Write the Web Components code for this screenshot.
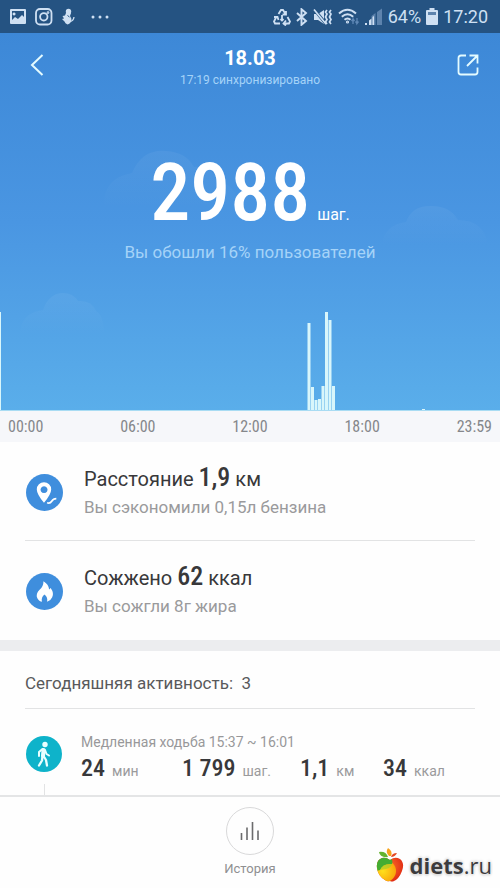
<!DOCTYPE html>
<html lang="ru">
<head>
<meta charset="utf-8">
<meta name="viewport" content="width=device-width, initial-scale=1">
<title>Шаги</title>
<style>
  :root { --digits: "Roboto Condensed", "Liberation Sans Narrow", Roboto, sans-serif; --line: #e2e3e4; }
  body { margin: 0; font-family: Roboto, "Noto Sans", sans-serif; background: #fefefe; color: #3a3a3c; }
</style>
</head>
<body>
<steps-app></steps-app>
<script>
const define = (name, html) => {
  const t = document.createElement('template');
  t.innerHTML = html;
  customElements.define(name, class extends HTMLElement {
    constructor() {
      super();
      this.attachShadow({ mode: 'open' }).append(t.content.cloneNode(true));
    }
  });
};

define('status-bar', `
<style>
  :host { display: flex; align-items: center; justify-content: space-between; height: 33px; padding: 0 12px 0 9px; background: #255382; color: #cfe0f3; font-size: 18px; line-height: 24px; }
  div { display: flex; align-items: center; }
  .left { gap: 8px; } .right { gap: 5px; }
  svg { display: block; }
</style>
<div class="left">
  <svg width="18" height="18" viewBox="0 0 18 18"><path fill="#cfe0f3" fill-rule="evenodd" d="M2 1h14q1 0 1 1v13q0 1-1 1H2q-1 0-1-1V2q0-1 1-1zM3 3v9l3-3 3 2 4-4 2 2V3zM5 4.500a1.500 1.500 0 1 0 .1 0z"/></svg>
  <svg width="18" height="18" viewBox="0 0 18 18" fill="none" stroke="#cfe0f3" stroke-width="1.800"><rect x="1" y="1" width="15.500" height="15.500" rx="4"/><circle cx="8.800" cy="8.800" r="3.700"/><circle cx="13" cy="4.600" r=".5"/></svg>
  <svg width="14" height="18" viewBox="0 0 14 18"><g fill="#cfe0f3"><circle cx="7.500" cy="3.500" r="2.700"/><path d="M5 5h5l-1 3 1.500 3-1 3.500q-1 1.500-3 2-2.500-1-3-3L1 11l2-.5L1.500 8 4 7.500z"/></g><path d="M9 13.500q3.500-.5 4-4.500M6 7l2 3" fill="none" stroke="#cfe0f3" stroke-width="1.300"/><path d="M6.500 7.500l2 1.500" stroke="#255382"/></svg>
  <svg width="34" height="18" viewBox="0 0 34 18" fill="#cfe0f3"><circle cx="10" cy="9" r="1.500"/><circle cx="17" cy="9" r="1.500"/><circle cx="24" cy="9" r="1.500"/></svg>
</div>
<div class="right">
  <svg width="18" height="18" viewBox="0 0 18 18" fill="none" stroke="#cfe0f3" stroke-width="1.800"><path d="M5.500 6l2.500-4h2L12.500 6M13 3v3.500H9.500M3.500 8.500L1 13.500l1 2H7M1 9h3.500l1 3M14.500 9l2.500 4.500-1 2h-5M13 12.500l-2.500 3 2.500 2M9 7v5M7.500 11L9 12.500l1.500-1.500"/></svg>
  <svg width="12" height="18" viewBox="0 0 12 18" fill="none" stroke="#cfe0f3" stroke-width="1.900"><path d="M1 5l9 8-4.500 3.800V1.200L10 5l-9 8"/></svg>
  <svg width="20" height="18" viewBox="0 0 20 18"><path fill="#cfe0f3" d="M1 6h4l6-4v14l-6-4H1z"/><path d="M1 1l12 15" stroke="#255382" stroke-width="3"/><path d="M1 1.500l12 14.500M14 2l-1.500 2L14 6l-1.500 3L14 11.500 12.500 14 14 16M18 2l-1.500 2L18 6l-1.500 3 1.500 2.500-1.500 2.500 1.500 2" fill="none" stroke="#cfe0f3" stroke-width="1.700"/></svg>
  <svg width="22" height="18" viewBox="0 0 22 18" fill="none" stroke="#cfe0f3" stroke-width="2"><path d="M1 5.500q8.500-7.500 17 0M3.800 8.800q5.700-5 11.400 0M6.500 11.800q3-2.600 6 0"/><circle cx="9.500" cy="14" r=".6"/><path d="M15 16v-5l-1.500 2M19 10v5.500l1.500-2M19 15.500l-1.500-2M15 11l1.500 2" stroke="#5f88b6" stroke-width="1.300"/></svg>
  <svg width="18" height="18" viewBox="0 0 18 18"><path fill="#5d83ad" d="M12 4l5-3.500V17h-5zM6.500 8l4-3v12h-4z"/><path fill="#cfe0f3" d="M0 15h2v2H0zM4 12.500l2.500-2V17H4zM7.500 9L9 8v9H7.500z"/></svg>
  <span>64%</span>
  <svg width="12" height="18" viewBox="0 0 12 18"><path fill="#cfe0f3" d="M3.500 0h5v2H11q1 0 1 1v13q0 1-1 1H1q-1 0-1-1V3q0-1 1-1h2.500z"/><path fill="#5d83ad" d="M2 4h8v3H2z"/></svg>
  <span>17:20</span>
</div>`);

define('step-chart', `
<style>:host { display: block; height: 100px; } svg { display: block; width: 100%; height: 100%; }</style>
<svg viewBox="0 0 500 100" preserveAspectRatio="none" fill="#d8f6fb" role="img" aria-label="Шаги за день">
  <path d="M0 1h1v98H0zM307.500 12h3v87h-3zM311 76h3v23h-3zM314.500 89h3v10h-3zM318 88h3v11h-3zM321.500 75h3v24h-3zM325 1h3v98h-3zM328.500 9h3v90h-3zM332 75h3v24h-3zM422 98h3v1h-3z"/>
  <path fill="#a9dcf3" d="M0 99h500v1H0z"/>
</svg>`);

define('steps-hero', `
<style>
  :host { display: block; position: relative; background: linear-gradient(#3d88d7, #4a96e2 50%, #5aaeea); color: #fff; text-align: center; }
  .clouds { position: absolute; inset: 0; width: 100%; height: 100%; }
  header, main, step-chart { position: relative; }
  header { display: grid; grid-template-columns: 48px 1fr 48px; align-items: start; padding: 10px 8px 1px; }
  header div { padding-top: 3px; }
  button { display: grid; place-items: center; width: 48px; height: 44px; padding: 0; border: 0; background: none; color: inherit; }
  button:first-child { padding-left: 10px; }
  h1 { margin: 0; font-size: 20px; line-height: 24px; font-weight: 700; }
  p { margin: 0; color: #a5d3f8; }
  .sync { font-size: 12px; line-height: 20px; }
  main { padding: 60px 0 47px; }
  .total { display: flex; justify-content: center; align-items: baseline; gap: 7px; line-height: 24px; font-size: 16px; }
  .total strong { font: 500 80px/84px var(--digits); }
  .note { font-size: 17px; line-height: 24px; padding-top: 5px; }
</style>
<svg class="clouds" viewBox="0 0 500 378" preserveAspectRatio="none">
  <defs><linearGradient id="c" x1="0" y1="0" x2="0" y2="1"><stop stop-color="#fff" stop-opacity=".05"/><stop offset="1" stop-color="#fff" stop-opacity="0"/></linearGradient></defs>
  <g fill="url(#c)">
    <path d="M104 175q-2-30 28-35 10-24 34-22 20 1 28 16 16-2 25 14 20 6 18 27z"/>
    <path d="M20 302q0-22 23-25 6-17 20-17 10 0 15 8 14-1 18 10 8 4 8 24z"/>
    <path d="M382 212q2-20 24-23 6-17 26-16 18 0 26 14 26 0 30 25z"/>
  </g>
</svg>
<header>
  <button aria-label="Назад"><svg width="14" height="22" viewBox="0 0 14 22" fill="none" stroke="#e4fbff" stroke-width="2"><path d="M12.500 1L2 11l10.500 10"/></svg></button>
  <div><h1>18.03</h1><p class="sync">17:19 синхронизировано</p></div>
  <button aria-label="Поделиться"><svg width="22" height="22" viewBox="0 0 22 22" fill="none" stroke="#e4fbff" stroke-width="1.800"><path d="M9 1.500H4Q1.500 1.500 1.500 4v14Q1.500 20.500 4 20.500h14q2.500 0 2.500-2.500v-4.500M12.500 1.500h8v8M20.500 1.500L10 12"/></svg></button>
</header>
<main>
  <div class="total"><strong>2988</strong><span>шаг.</span></div>
  <p class="note">Вы обошли 16% пользователей</p>
</main>
<step-chart></step-chart>`);

define('time-axis', `
<style>:host { display: flex; justify-content: space-between; padding: 0 8px; background: #f6f7fa; color: #85878b; font: 400 16px/31px var(--digits); }</style>
<span>00:00</span><span>06:00</span><span>12:00</span><span>18:00</span><span>23:59</span>`);

define('metric-row', `
<style>
  :host { display: flex; align-items: center; gap: 21px; margin: 0 25px; padding: 23px 0 21px 1px; border-bottom: 1px solid var(--metric-line, transparent); }
  h2 { margin: 0 0 2px; font-size: 20px; line-height: 28px; font-weight: 400; color: #38383a; }
  p { margin: 0; font-size: 17px; line-height: 24px; color: #9a9a9c; }
  ::slotted(b) { font-family: var(--digits); font-weight: 500; font-size: 26px; line-height: 20px; }
  ::slotted(svg) { display: block; flex: none; }
</style>
<slot name="icon"></slot>
<div><h2><slot></slot></h2><p><slot name="note"></slot></p></div>`);

define('stat-item', `
<style>
  :host { display: flex; align-items: baseline; gap: 7px; font-size: 14px; line-height: 28px; color: #9a9a9c; white-space: nowrap; }
  b { font: 500 24px/28px var(--digits); color: #38383a; }
</style>
<b><slot></slot></b><span><slot name="unit"></slot></span>`);

define('activity-list', `
<style>
  :host { display: flex; flex-direction: column; flex: 1; border-top: 11px solid #ecedef; padding: 0 25px; }
  h2 { margin: 0; padding: 20px 0 13px; font-size: 17px; line-height: 24px; font-weight: 400; color: #59595b; border-bottom: 1px solid var(--line); white-space: pre; }
  .item { flex: 1; display: grid; grid-template-columns: 36px 1fr; gap: 19px; padding-left: 1px; }
  .rail { display: flex; flex-direction: column; align-items: center; padding-top: 27px; gap: 12px; }
  .rail i { flex: 1; width: 1px; background: var(--line); }
  .body { padding-top: 23px; }
  p { margin: 0; font-size: 14px; line-height: 20px; color: #98989a; }
  .stats { display: grid; grid-template-columns: 101fr 118fr 83fr 92fr; padding-top: 2px; }
</style>
<h2>Сегодняшняя активность:  3</h2>
<div class="item">
  <div class="rail">
    <svg width="36" height="36" viewBox="0 0 36 36"><circle cx="18" cy="18" r="18" fill="#0eb3ca"/><circle cx="19" cy="8.500" r="2.700" fill="#eaffff"/><g fill="none" stroke="#eaffff" stroke-linecap="round" stroke-linejoin="round"><path stroke-width="4" d="M17.500 14l-.5 6"/><path stroke-width="2" d="M16.500 13l-3.500 3v4M19 14l1.500 4 2.500 1.500"/><path stroke-width="2.300" d="M16.500 20l-.5 4.500-3 5M17.500 20l2.500 4 1 5.500"/></g></svg>
    <i></i>
  </div>
  <div class="body">
    <p>Медленная ходьба 15:37 ~ 16:01</p>
    <div class="stats">
      <stat-item>24<span slot="unit">мин</span></stat-item>
      <stat-item>1 799<span slot="unit">шаг.</span></stat-item>
      <stat-item>1,1<span slot="unit">км</span></stat-item>
      <stat-item>34<span slot="unit">ккал</span></stat-item>
    </div>
  </div>
</div>`);

define('bottom-bar', `
<style>
  :host { display: flex; justify-content: center; border-top: 2px solid #e4e5e6; padding: 10px 0 10px; }
  button { display: flex; flex-direction: column; align-items: center; gap: 5px; padding: 0; border: 0; background: none; color: #8f8f91; font: 13px/18px Roboto, sans-serif; }
  .ring { display: grid; place-items: center; width: 46px; height: 46px; border: 1px solid #d9d9da; border-radius: 50%; }
</style>
<button><span class="ring"><svg width="20" height="20" viewBox="0 0 20 20" stroke="#6b6b6d" stroke-width="1.600"><path d="M1.500 12v7M7 6.500V19M12.500 1v18M18 9.500V19"/></svg></span>История</button>`);

define('diets-mark', `
<style>
  :host { position: absolute; right: 8px; bottom: 6px; display: flex; align-items: center; gap: 6px; }
  a { color: #3b3b3d; text-decoration: none; font: 22px/30px "Open Sans", sans-serif; text-shadow: 0 0 2px #fff, 0 1px 3px #bbb, 0 -1px 3px #ccc; }
  b { font-weight: 700; }
</style>
<svg width="28" height="34" viewBox="0 0 28 34">
  <defs>
    <radialGradient id="r" cx=".4" cy=".4" r=".7"><stop stop-color="#ff7a2c"/><stop offset="1" stop-color="#dc1f10"/></radialGradient>
    <radialGradient id="y" cx=".4" cy=".5" r=".6"><stop stop-color="#ffe01c"/><stop offset="1" stop-color="#f9a50a"/></radialGradient>
    <clipPath id="a"><path d="M14 12q5-4 10-1 5 4 2 12-3 8-8 10-2 1-4 0-3 1-5-1Q2 28 1 20 0 12 6 10q4-1 8 2z"/></clipPath>
  </defs>
  <g clip-path="url(#a)"><path fill="url(#r)" d="M0 8h28v26H0z"/><circle cx="9" cy="23" r="11" fill="url(#y)"/><path fill="#43ad32" d="M0 8h11q7 3 5 8-9-1-12 6l-4 1z"/><path fill="#a8cf28" d="M4 22q3-7 12-6-1 4-6 5z" opacity=".7"/></g>
  <path fill="#62b32e" d="M12 9Q4 10 3 4q7-1 9 5z"/><path fill="#f7a21b" d="M13 8q-4-4-1-8 5 3 3 8z"/><path fill="#e54822" d="M15 9q1-4 6-4-2 4-6 4z"/>
</svg>
<a href="#"><b>diets</b>.ru</a>`);

define('steps-app', `
<style>
  :host { position: relative; display: flex; flex-direction: column; min-height: 100vh; }
  .first { --metric-line: var(--line); }
</style>
<status-bar></status-bar>
<steps-hero></steps-hero>
<time-axis></time-axis>
<metric-row class="first">
  <svg slot="icon" width="37" height="37" viewBox="0 0 36 36"><circle cx="18" cy="18" r="18" fill="#3f8edd"/><path fill="#fff" fill-rule="evenodd" d="M17.500 8a7 7 0 0 1 7 7q0 4.500-7 13-7-8.500-7-13a7 7 0 0 1 7-7zm0 3.800a3.400 3.400 0 1 0 .1 0z"/><path d="M20.500 28q3 1 4.500-1.500t4.500-2.500" fill="none" stroke="#fff" stroke-width="1.600"/></svg>
  Расстояние <b>1,9</b> км<span slot="note">Вы сэкономили 0,15л бензина</span>
</metric-row>
<metric-row>
  <svg slot="icon" width="37" height="37" viewBox="0 0 36 36"><circle cx="18" cy="18" r="18" fill="#3f8edd"/><path fill="#fff" d="M17 8q5 3 5.500 8l1.500-1.500q3.500 5 1.500 9-1.500 3.500-5 4.500 1-4-2.500-7-3.500 3-2.500 7-4-1-5-5-.5-3.500 2.500-6.500 4-3 4-8.500z"/></svg>
  Сожжено <b>62</b> ккал<span slot="note">Вы сожгли 8г жира</span>
</metric-row>
<activity-list></activity-list>
<bottom-bar></bottom-bar>
<diets-mark></diets-mark>`);
</script>
</body>
</html>
